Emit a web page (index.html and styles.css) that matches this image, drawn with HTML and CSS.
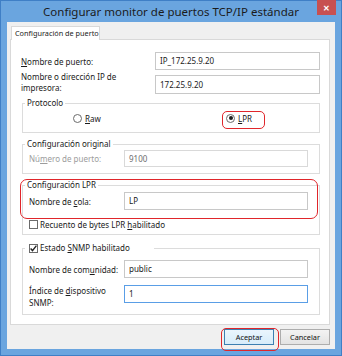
FILE: index.html
```html
<!DOCTYPE html>
<html lang="es">
<head>
<meta charset="utf-8">
<title>Configurar monitor de puertos TCP/IP estándar</title>
<link rel="stylesheet" href="styles.css">
</head>
<body>
<div class="window">
  <div class="titlebar">
    <span></span>
    <div class="title">Configurar monitor de puertos TCP/IP estándar</div>
    <div class="close">✕</div>
  </div>
  <div class="client">
    <div class="tabs"><div class="tab">Configuración de puerto</div></div>
    <div class="panel">
      <div class="row r1">
        <div class="lbl top-lbl"><u>N</u>ombre de puerto:</div>
        <div class="field">IP_172.25.9.20</div>
      </div>
      <div class="row r2">
        <div class="lbl top-lbl two"><span>Nombre o dirección IP de</span><br><span>impresora:</span></div>
        <div class="field tall">172.25.9.20</div>
      </div>

      <fieldset class="grp proto">
        <legend>Protocolo</legend>
        <div class="radios">
          <div class="opt first"><span class="radio"></span><span><u>R</u>aw</span></div>
          <div class="opt"><span class="radio on"></span><span><u>L</u>PR</span></div>
        </div>
      </fieldset>

      <fieldset class="grp orig">
        <legend>Configuración original</legend>
        <div class="row">
          <div class="lbl in-lbl disabled">Nú<u>m</u>ero de puerto:</div>
          <div class="field in-field short disabled">9100</div>
        </div>
      </fieldset>

      <fieldset class="grp lpr">
        <legend>Configuración LPR</legend>
        <div class="row first-in">
          <div class="lbl in-lbl">Nombre de <u>c</u>ola:</div>
          <div class="field in-field">LP</div>
        </div>
        <div class="check-row">
          <span class="check"></span><span>Recuento de bytes LPR <u>h</u>abilitado</span>
        </div>
      </fieldset>

      <fieldset class="grp snmp">
        <legend class="chk-legend">
          <span class="check on"><svg viewBox="0 0 9 9" width="9" height="9"><path d="M1.6 4.6 L3.5 6.6 L7.4 1.6" fill="none" stroke="#222" stroke-width="1.4"/></svg></span><span>Estado <u>S</u>NMP habilitado</span>
        </legend>
        <div class="row first-in">
          <div class="lbl in-lbl">Nombre de com<u>u</u>nidad:</div>
          <div class="field in-field">public</div>
        </div>
        <div class="row r-idx">
          <div class="lbl in-lbl two-b"><span>Índice de <u>d</u>ispositivo</span><br><span>SNMP:</span></div>
          <div class="field in-field focus">1</div>
        </div>
      </fieldset>
    </div>
    <div class="buttons">
      <div class="btn default">Aceptar</div>
      <div class="btn">Cancelar</div>
    </div>
  </div>

  <div class="mark mark-lpr"></div>
  <div class="mark mark-group"></div>
  <div class="mark mark-ok"></div>
</div>
</body>
</html>
```

FILE: styles.css
```css
* { box-sizing: border-box; }
html, body { margin: 0; padding: 0; }
body {
  width: 342px;
  height: 356px;
  font-family: "Noto Sans", "Liberation Sans", sans-serif;
  font-size: 8px;
  color: #1a1a1a;
  background: #fff;
}
u { text-decoration: underline; text-underline-offset: 1px; }

.window {
  position: relative;
  width: 342px;
  height: 356px;
  background: #6aa5df;
  border: 1px solid #3f7fc6;
  display: flex;
  flex-direction: column;
}
.titlebar {
  height: 21px;
  display: grid;
  grid-template-columns: 1fr auto 1fr;
  align-items: start;
  flex: none;
}
.title {
  font-size: 11.5px;
  line-height: 21px;
  color: #1b1b1b;
  white-space: nowrap;
}
.close {
  justify-self: end;
  margin-right: 5px;
  margin-top: -1px;
  width: 19px;
  height: 15px;
  background: #c75050;
  color: #fff;
  font-size: 8px;
  font-weight: bold;
  line-height: 15px;
  text-align: center;
}

.client {
  margin: 0 6px 6px 6px;
  flex: 1;
  background: #f0f0f0;
  padding: 4px 5px 4px 3px;
  display: flex;
  flex-direction: column;
}
.tabs {
  display: flex;
  padding-left: 1px;
  height: 14px;
  margin-bottom: -1px;
  position: relative;
  z-index: 1;
}
.tab {
  width: 89px;
  height: 14px;
  border: 1px solid #d9d9d9;
  border-bottom: none;
  background: #fff;
  font-size: 7.3px;
  line-height: 12px;
  padding: 0 3px;
  white-space: nowrap;
  color: #222;
}
.panel {
  height: 286px;
  flex: none;
  background: #fff;
  border: 1px solid #d9d9d9;
  padding: 12px 9px 0 11px;
}

.row { display: flex; align-items: center; }
.lbl { white-space: nowrap; }
.top-lbl { width: 134px; margin-left: -1px; }
.field {
  flex: 1;
  height: 18px;
  border: 1px solid #c8c8c8;
  background: #fff;
  padding: 0 4px;
  line-height: 16px;
  white-space: nowrap;
}
.r2 { margin-top: 5px; align-items: flex-start; }
.two { line-height: 11px; margin-top: -4px; }
.field.tall { height: 19px; line-height: 17px; }

.grp {
  margin: 0;
  border: 1px solid #dcdcdc;
  padding: 0 11px 0 6px;
  min-width: 0;
}
.grp legend {
  padding: 0 2px;
  margin-left: -4px;
  line-height: 12px;
  font-size: 8px;
}
.proto { margin-top: 3px; padding-bottom: 8px; }
.radios {
  display: flex;
  align-items: center;
  padding-left: 44px;
  margin-top: 3px;
  height: 12px;
}
.opt { display: flex; align-items: center; }
.opt.first { width: 153px; }
.radio {
  width: 9px;
  height: 9px;
  border: 1px solid #6b6b6b;
  border-radius: 50%;
  background: #fff;
  margin-right: 3px;
  display: flex;
  align-items: center;
  justify-content: center;
}
.radio.on::after {
  content: "";
  width: 4px;
  height: 4px;
  border-radius: 50%;
  background: #1e1e1e;
}

.orig { margin-top: 5px; padding-bottom: 6px; }
.in-lbl { width: 95px; }
.in-field { flex: none; width: 184px; }
.field.short { height: 17px; line-height: 15px; }
.disabled { color: #9c9c9c; }
.field.disabled { color: #6d6d6d; border-color: #d9d9d9; }

.lpr { margin-top: 5px; padding-bottom: 4px; }
.first-in { margin-top: 1px; }
.check-row {
  display: flex;
  align-items: center;
  height: 12px;
  margin-top: 8px;
}
.check {
  width: 9px;
  height: 9px;
  border: 1px solid #6b6b6b;
  background: #fff;
  margin-right: 2px;
  display: inline-flex;
  align-items: center;
  justify-content: center;
  flex: none;
}
.check.on { border: none; outline: 1px solid #6b6b6b; outline-offset: -1px; }
.check svg { display: block; }

.snmp { margin-top: 7px; padding-bottom: 5px; }
.chk-legend {
  display: flex;
  align-items: center;
  padding: 0 24px 0 4px !important;
}
.snmp .first-in { margin-top: 6px; }
.r-idx { margin-top: 7px; align-items: flex-start; }
.two-b { line-height: 12px; }
.field.focus { border-color: #5a9ee6; }

.buttons {
  display: flex;
  justify-content: flex-end;
  gap: 6px;
  margin-top: 4px;
}
.btn {
  width: 50px;
  height: 16px;
  border: 1px solid #adadad;
  background: linear-gradient(#f3f3f3, #e3e3e3);
  font-size: 7.3px;
  display: flex;
  align-items: center;
  justify-content: center;
  color: #111;
}
.btn.default {
  border-color: #3c7fb1;
  background: linear-gradient(#eaf5fd, #d6ecfa);
}

.mark {
  position: absolute;
  border: 1.5px solid #e0262b;
  border-radius: 5px;
  pointer-events: none;
}
.mark-lpr { left: 221px; top: 110px; width: 43px; height: 18px; }
.mark-group { left: 19px; top: 178px; width: 298px; height: 40px; border-radius: 7px; }
.mark-ok { left: 220px; top: 327px; width: 58px; height: 23px; }
```
